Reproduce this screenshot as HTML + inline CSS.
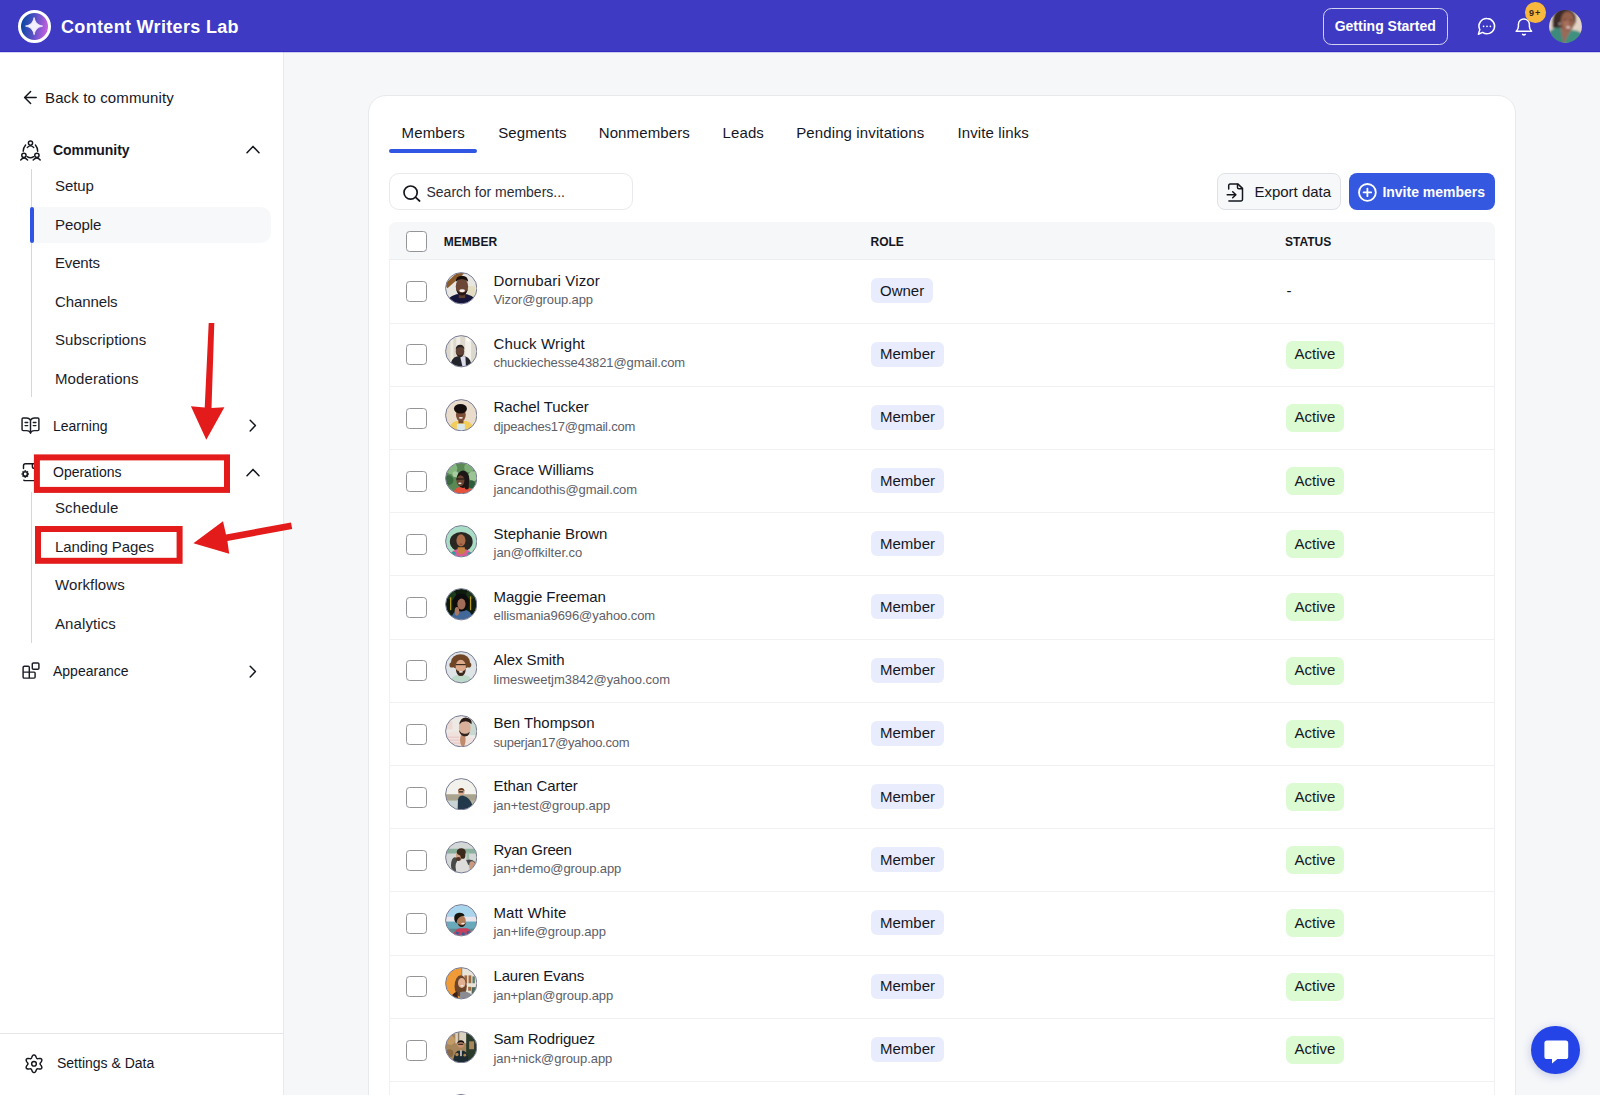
<!DOCTYPE html>
<html lang="en"><head><meta charset="utf-8"><title>Content Writers Lab – People</title>
<style>
*{box-sizing:border-box}
html,body{margin:0;padding:0}
body{width:1600px;height:1095px;overflow:hidden;background:#f6f7f9;font-family:"Liberation Sans",sans-serif;color:#15171f;position:relative}
.abs,.t,.av,.cb,.nm,.em,.role,.st,.dash,.sep{position:absolute}
.t{line-height:1;white-space:nowrap}
#top{position:absolute;left:0;top:0;width:1600px;height:52px;background:#3e3ac4;border-bottom:1px solid #332cc3;box-shadow:0 1px 0 rgba(62,58,196,.22)}
#side{position:absolute;left:0;top:52px;width:284px;height:1043px;background:#fff;border-right:1px solid #e7e9ed}
#card{position:absolute;left:368px;top:95px;width:1148px;height:1030px;background:#fff;border:1px solid #e7e9ec;border-radius:18px}
.s15{font-size:15px}.s14{font-size:14px}.b{font-weight:700}
.sub{left:55px;font-size:15px;letter-spacing:.1px;color:#1b1d29}
.topi{left:53px;font-size:14px;color:#15171f}
.vline{position:absolute;left:31px;width:1.2px;background:#d9d6da}
svg.ic{position:absolute;overflow:visible}
.cb{width:20.5px;height:20.5px;border:1.5px solid #949599;border-radius:3.6px;background:#fff}
.nm{left:493.5px;font-size:15px;line-height:1;color:#15171f;white-space:nowrap}
.em{left:493.5px;font-size:13px;line-height:1;color:#5d6068;white-space:nowrap}
.role{left:871.3px;height:25px;overflow:hidden;padding:0 8.7px;background:#e8ecfd;border-radius:6px;font-size:15px;color:#15171f;white-space:nowrap}
.st{left:1286px;height:28.4px;overflow:hidden;padding:0 8.5px;background:#dcfbd3;border-radius:6.5px;font-size:15px;color:#15171f;white-space:nowrap}
.dash{left:1286.5px;font-size:15px;line-height:1}
.sep{left:390px;width:1105px;height:1px;background:#f0f1f3}
.tab{font-size:15px;letter-spacing:.12px;top:125.3px;color:#15171f}
.th{font-size:12px;font-weight:700;top:235.8px;color:#15171f}
</style></head><body>

<!-- main card -->
<div id="card"></div>
<!-- tabs -->
<div class="t tab" style="left:401.6px">Members</div>
<div class="t tab" style="left:498.2px">Segments</div>
<div class="t tab" style="left:598.7px">Nonmembers</div>
<div class="t tab" style="left:722.5px">Leads</div>
<div class="t tab" style="left:796.2px">Pending invitations</div>
<div class="t tab" style="left:957.5px">Invite links</div>
<div class="abs" style="left:389.4px;top:148.8px;width:87.8px;height:3.8px;border-radius:2px;background:#3056e3"></div>

<!-- search -->
<div class="abs" style="left:389px;top:173px;width:244px;height:37px;border:1px solid #e7e9ec;border-radius:10px;background:#fff"></div>
<svg class="ic" style="left:403px;top:185px" width="18" height="17" viewBox="0 0 18 17"><circle cx="7.6" cy="7.6" r="6.6" fill="none" stroke="#15171f" stroke-width="1.7"/><path d="M12.4 12.2 L16.6 16" stroke="#15171f" stroke-width="1.7" stroke-linecap="round"/></svg>
<div class="t s14" style="left:426.5px;top:185.1px;color:#2b2d36">Search for members...</div>

<!-- buttons -->
<div class="abs" style="left:1216.5px;top:173px;width:124.2px;height:37px;border:1px solid #dfe1e6;border-radius:8px;background:#f7f8fa"></div>
<svg class="ic" style="left:1226px;top:182.5px" width="18" height="19" viewBox="0 0 18 19" fill="none" stroke="#15171f" stroke-width="1.5" stroke-linecap="round" stroke-linejoin="round"><path d="M2.7 5.9 V2.5 Q2.7 1.1 4.1 1.1 H12 L16.5 5.4 V16.5 Q16.5 17.9 15.1 17.9 H2.9"/><path d="M11.5 1.3 V4.4 Q11.5 5.7 12.8 5.7 H16.3"/><path d="M1.2 11.8 H9.7 M6.7 8.8 L9.9 11.8 L6.7 14.8"/></svg>
<div class="t s15" style="left:1254.4px;top:184.3px">Export data</div>
<div class="abs" style="left:1348.6px;top:173px;width:146.6px;height:37px;border-radius:8px;background:#3558e0"></div>
<svg class="ic" style="left:1358px;top:182.7px" width="19" height="19" viewBox="0 0 19 19" fill="none" stroke="#fff" stroke-width="1.8" stroke-linecap="round"><circle cx="9.4" cy="9.4" r="8.4"/><path d="M9.4 5.6 V13.2 M5.6 9.4 H13.2"/></svg>
<div class="t s14 b" style="left:1382.4px;top:185.1px;color:#fff">Invite members</div>

<!-- table -->
<div class="abs" style="left:389.4px;top:222.4px;width:1106px;height:900px;border-left:1px solid #f0f1f4;border-right:1px solid #f0f1f4;border-radius:8px 8px 0 0"></div>
<div class="abs" style="left:389.4px;top:222.4px;width:1106px;height:37.4px;background:#f6f7f9;border-radius:8px 8px 0 0;border-bottom:1px solid #eceef1"></div>
<div class="cb" style="left:406px;top:231px"></div>
<div class="t th" style="left:443.8px">MEMBER</div>
<div class="t th" style="left:870.5px">ROLE</div>
<div class="t th" style="left:1285px">STATUS</div>
<div class="sep" style="top:323px"></div>
<div class="cb" style="left:406px;top:281px"></div>
<svg class="av" style="left:444.7px;top:272.2px" width="32.5" height="32.5" viewBox="0 0 33 33"><defs><clipPath id="c0"><circle cx="16.5" cy="16.5" r="15.6"/></clipPath><filter id="b0" x="-10%" y="-10%" width="120%" height="120%"><feGaussianBlur stdDeviation="0.5"/></filter></defs><g clip-path="url(#c0)"><g transform="translate(0.5,0.5)" filter="url(#b0)"><rect x="-2" y="-2" width="36" height="36" fill="#e7e6e1"/><path d="M-1 12 L12 0 L20 0 L2 16 Z" fill="#8a5a2c"/><rect x="22" y="14" width="8" height="14" fill="#e4dcc0"/><ellipse cx="16.5" cy="30" rx="14" ry="8.5" fill="#15173a"/><rect x="13.5" y="20" width="6.5" height="6" fill="#5b3a2c"/><ellipse cx="16.7" cy="14.2" rx="6.3" ry="8.6" fill="#6d4636"/><path d="M10.4 9.5 Q10.5 3.3 16.7 3.3 Q22.9 3.3 23 9.5 Q20 6.6 16.7 6.6 Q13.4 6.6 10.4 9.5Z" fill="#16100e"/><path d="M10.8 16 Q11.5 23.4 16.7 23.4 Q21.9 23.4 22.6 16 Q21.5 20.4 16.7 20.6 Q11.9 20.4 10.8 16Z" fill="#231613"/><ellipse cx="16.9" cy="18.6" rx="2.9" ry="1.5" fill="#f6f1ec"/></g></g><circle cx="16.5" cy="16.5" r="15.9" fill="none" stroke="#737790" stroke-width="1"/></svg>
<div class="nm" style="top:273px;letter-spacing:0.17px">Dornubari Vizor</div>
<div class="em" style="top:293px;letter-spacing:-0.11px">Vizor@group.app</div>
<div class="role" style="top:278px;line-height:25px">Owner</div>
<div class="dash" style="top:283px">-</div>
<div class="sep" style="top:386px"></div>
<div class="cb" style="left:406px;top:344px"></div>
<svg class="av" style="left:444.7px;top:335.4px" width="32.5" height="32.5" viewBox="0 0 33 33"><defs><clipPath id="c1"><circle cx="16.5" cy="16.5" r="15.6"/></clipPath><filter id="b1" x="-10%" y="-10%" width="120%" height="120%"><feGaussianBlur stdDeviation="0.5"/></filter></defs><g clip-path="url(#c1)"><g transform="translate(0.5,0.5)" filter="url(#b1)"><rect x="-2" y="-2" width="36" height="36" fill="#ddd8cd"/><rect x="5" y="-2" width="3" height="36" fill="#efebe2"/><rect x="11" y="-2" width="4" height="36" fill="#f1ede6"/><rect x="20" y="-2" width="6" height="36" fill="#f3f0ea"/><circle cx="22.8" cy="4.4" r="2" fill="#fffdf6"/><path d="M4.5 34 Q5 22.5 12 21.2 L20 21 Q26.5 22.6 27 34 Z" fill="#24262c"/><path d="M14.8 21 L20.2 21 L20.8 33 L17.6 33 Z" fill="#dddcec"/><ellipse cx="14.7" cy="16.2" rx="4.3" ry="5.6" fill="#5e4334"/><path d="M10.3 14.4 Q10.6 9.3 14.8 9.3 Q19 9.3 19.2 14.2 Q17 11.8 14.7 11.8 Q12.4 11.8 10.3 14.4Z" fill="#2b2422"/><path d="M11.6 18.6 Q12.6 22.2 15 22 Q17.6 21.8 18.4 18.4 Q17 20.4 15 20.4 Q13 20.4 11.6 18.6Z" fill="#2e221d"/></g></g><circle cx="16.5" cy="16.5" r="15.9" fill="none" stroke="#737790" stroke-width="1"/></svg>
<div class="nm" style="top:336px;letter-spacing:0.14px">Chuck Wright</div>
<div class="em" style="top:356px;letter-spacing:-0.08px">chuckiechesse43821@gmail.com</div>
<div class="role" style="top:342px;line-height:23px">Member</div>
<div class="st" style="top:341px;line-height:25px">Active</div>
<div class="sep" style="top:449px"></div>
<div class="cb" style="left:406px;top:408px"></div>
<svg class="av" style="left:444.7px;top:398.6px" width="32.5" height="32.5" viewBox="0 0 33 33"><defs><clipPath id="c2"><circle cx="16.5" cy="16.5" r="15.6"/></clipPath><filter id="b2" x="-10%" y="-10%" width="120%" height="120%"><feGaussianBlur stdDeviation="0.5"/></filter></defs><g clip-path="url(#c2)"><g transform="translate(0.5,0.5)" filter="url(#b2)"><rect x="-2" y="-2" width="36" height="36" fill="#eadccb"/><path d="M3 34 Q4 23 11 21.8 L21 21.8 Q28.6 23 29.5 34 Z" fill="#f3cd58"/><path d="M11.6 25 Q15.5 23.6 19.6 25 L19.8 34 L11.4 34Z" fill="#d9e6ea"/><rect x="13.2" y="19" width="5" height="5.2" fill="#71452f"/><ellipse cx="15.6" cy="15.6" rx="5" ry="6.6" fill="#7b4d35"/><ellipse cx="15.2" cy="9.4" rx="6.6" ry="4.9" fill="#17110f"/><ellipse cx="15.6" cy="18.6" rx="2.1" ry="0.9" fill="#f3ebe4"/></g></g><circle cx="16.5" cy="16.5" r="15.9" fill="none" stroke="#737790" stroke-width="1"/></svg>
<div class="nm" style="top:399px;letter-spacing:-0.05px">Rachel Tucker</div>
<div class="em" style="top:420px;letter-spacing:-0.22px">djpeaches17@gmail.com</div>
<div class="role" style="top:405px;line-height:23px">Member</div>
<div class="st" style="top:404px;line-height:25px">Active</div>
<div class="sep" style="top:512px"></div>
<div class="cb" style="left:406px;top:471px"></div>
<svg class="av" style="left:444.7px;top:461.8px" width="32.5" height="32.5" viewBox="0 0 33 33"><defs><clipPath id="c3"><circle cx="16.5" cy="16.5" r="15.6"/></clipPath><filter id="b3" x="-10%" y="-10%" width="120%" height="120%"><feGaussianBlur stdDeviation="0.5"/></filter></defs><g clip-path="url(#c3)"><g transform="translate(0.5,0.5)" filter="url(#b3)"><rect x="-2" y="-2" width="36" height="36" fill="#5a8956"/><circle cx="6" cy="6" r="6" fill="#86b67f"/><circle cx="24" cy="5" r="5" fill="#7eae78"/><circle cx="28" cy="14" r="5" fill="#9cc596"/><circle cx="3" cy="18" r="5" fill="#3a6a40"/><circle cx="26" cy="22" r="4" fill="#2f5c37"/><circle cx="10" cy="12" r="3" fill="#a6cc9f"/><path d="M7 34 Q8.5 26 14 25 L22 24.6 Q27.6 26 28.6 34Z" fill="#e8513b"/><ellipse cx="17.8" cy="17" rx="6.4" ry="8.8" fill="#1e1715"/><rect x="19.5" y="17" width="4.2" height="10.5" rx="2" fill="#1e1715"/><ellipse cx="15.2" cy="18.4" rx="4" ry="5.5" fill="#6c4533"/><rect x="11" y="16.2" width="8" height="1.1" fill="#1a1513"/><ellipse cx="14.6" cy="21.2" rx="1.8" ry="0.8" fill="#efe6e0"/></g></g><circle cx="16.5" cy="16.5" r="15.9" fill="none" stroke="#737790" stroke-width="1"/></svg>
<div class="nm" style="top:462px;letter-spacing:-0.04px">Grace Williams</div>
<div class="em" style="top:483px;letter-spacing:-0.09px">jancandothis@gmail.com</div>
<div class="role" style="top:468px;line-height:25px">Member</div>
<div class="st" style="top:467px;line-height:27px">Active</div>
<div class="sep" style="top:575px"></div>
<div class="cb" style="left:406px;top:534px"></div>
<svg class="av" style="left:444.7px;top:525.0px" width="32.5" height="32.5" viewBox="0 0 33 33"><defs><clipPath id="c4"><circle cx="16.5" cy="16.5" r="15.6"/></clipPath><filter id="b4" x="-10%" y="-10%" width="120%" height="120%"><feGaussianBlur stdDeviation="0.5"/></filter></defs><g clip-path="url(#c4)"><g transform="translate(0.5,0.5)" filter="url(#b4)"><rect x="-2" y="-2" width="36" height="36" fill="#a9ddc5"/><ellipse cx="16" cy="16.4" rx="11.6" ry="9.8" fill="#2b2521"/><ellipse cx="16" cy="21" rx="9.5" ry="5" fill="#2b2521"/><path d="M4 34 Q5 25.4 11.4 24 L20.6 24 Q27 25.4 28 34Z" fill="#d95b9a"/><circle cx="8" cy="28.5" r="2.2" fill="#2f9c98"/><circle cx="24.6" cy="29" r="2.2" fill="#2f9c98"/><path d="M12.4 22 L19.6 22 L20 27 Q16 32 12 27Z" fill="#c4813f"/><ellipse cx="15.7" cy="15.2" rx="4.6" ry="6.2" fill="#a96d49"/><ellipse cx="15.7" cy="19" rx="1.5" ry="0.6" fill="#8c3f3a"/></g></g><circle cx="16.5" cy="16.5" r="15.9" fill="none" stroke="#737790" stroke-width="1"/></svg>
<div class="nm" style="top:526px;letter-spacing:-0.02px">Stephanie Brown</div>
<div class="em" style="top:546px">jan@offkilter.co</div>
<div class="role" style="top:531px;line-height:25px">Member</div>
<div class="st" style="top:530px;line-height:27px">Active</div>
<div class="sep" style="top:639px"></div>
<div class="cb" style="left:406px;top:597px"></div>
<svg class="av" style="left:444.7px;top:588.2px" width="32.5" height="32.5" viewBox="0 0 33 33"><defs><clipPath id="c5"><circle cx="16.5" cy="16.5" r="15.6"/></clipPath><filter id="b5" x="-10%" y="-10%" width="120%" height="120%"><feGaussianBlur stdDeviation="0.5"/></filter></defs><g clip-path="url(#c5)"><g transform="translate(0.5,0.5)" filter="url(#b5)"><rect x="-2" y="-2" width="36" height="36" fill="#0e1a11"/><circle cx="6" cy="7" r="5" fill="#1f3a1e"/><circle cx="26" cy="6" r="5" fill="#1b3319"/><rect x="4.6" y="9" width="1.3" height="13" fill="#b5981f"/><rect x="24.8" y="8" width="1.3" height="14" fill="#b5981f"/><path d="M5 34 Q6 24 12.6 22.4 L21.6 22 Q27.6 24 28.6 34Z" fill="#40699a"/><ellipse cx="15.8" cy="14.2" rx="8.2" ry="9.2" fill="#0b0909"/><ellipse cx="16.2" cy="15.8" rx="4.2" ry="5.6" fill="#a16d59"/><ellipse cx="11.6" cy="23.2" rx="2.3" ry="4.4" fill="#a97662"/></g></g><circle cx="16.5" cy="16.5" r="15.9" fill="none" stroke="#737790" stroke-width="1"/></svg>
<div class="nm" style="top:589px;letter-spacing:-0.08px">Maggie Freeman</div>
<div class="em" style="top:609px;letter-spacing:-0.08px">ellismania9696@yahoo.com</div>
<div class="role" style="top:594px;line-height:25px">Member</div>
<div class="st" style="top:593px;line-height:27px">Active</div>
<div class="sep" style="top:702px"></div>
<div class="cb" style="left:406px;top:660px"></div>
<svg class="av" style="left:444.7px;top:651.4px" width="32.5" height="32.5" viewBox="0 0 33 33"><defs><clipPath id="c6"><circle cx="16.5" cy="16.5" r="15.6"/></clipPath><filter id="b6" x="-10%" y="-10%" width="120%" height="120%"><feGaussianBlur stdDeviation="0.5"/></filter></defs><g clip-path="url(#c6)"><g transform="translate(0.5,0.5)" filter="url(#b6)"><rect x="-2" y="-2" width="36" height="36" fill="#dfe4e7"/><path d="M4 34 Q5 25.6 11.4 24.2 L20.4 24.2 Q27 25.6 28 34Z" fill="#bdd9c9"/><ellipse cx="15.2" cy="10.6" rx="9.6" ry="7.8" fill="#6f4527"/><circle cx="6.6" cy="13.6" r="2.6" fill="#6f4527"/><circle cx="23.6" cy="13.6" r="2.6" fill="#6f4527"/><ellipse cx="15.5" cy="15.4" rx="5.2" ry="7" fill="#dcaa8b"/><path d="M10.4 17 Q11 25 15.6 25 Q20.2 25 20.7 17 Q19.5 20.4 15.6 20 Q11.6 20.4 10.4 17Z" fill="#3b271b"/><rect x="10.6" y="12.7" width="10" height="1.2" fill="#3a2a22"/><ellipse cx="15.6" cy="20.6" rx="2.2" ry="0.9" fill="#f1e7e0"/></g></g><circle cx="16.5" cy="16.5" r="15.9" fill="none" stroke="#737790" stroke-width="1"/></svg>
<div class="nm" style="top:652px;letter-spacing:-0.07px">Alex Smith</div>
<div class="em" style="top:673px;letter-spacing:-0.03px">limesweetjm3842@yahoo.com</div>
<div class="role" style="top:658px;line-height:23px">Member</div>
<div class="st" style="top:657px;line-height:25px">Active</div>
<div class="sep" style="top:765px"></div>
<div class="cb" style="left:406px;top:724px"></div>
<svg class="av" style="left:444.7px;top:714.6px" width="32.5" height="32.5" viewBox="0 0 33 33"><defs><clipPath id="c7"><circle cx="16.5" cy="16.5" r="15.6"/></clipPath><filter id="b7" x="-10%" y="-10%" width="120%" height="120%"><feGaussianBlur stdDeviation="0.5"/></filter></defs><g clip-path="url(#c7)"><g transform="translate(0.5,0.5)" filter="url(#b7)"><rect x="-2" y="-2" width="36" height="36" fill="#ede9e5"/><rect x="24" y="4" width="10" height="16" fill="#c9d9d1"/><rect x="-2" y="6" width="9" height="8" fill="#ecd9d2"/><path d="M-1 34 L0 20 Q6 14.6 14 17 L20 21 L30 24 L30 34Z" fill="#f1e1dd"/><path d="M1 22 H14 M0 25 H15 M1 28 H16 M3 31 H17" stroke="#e3bcbc" stroke-width="0.8" fill="none"/><ellipse cx="17.6" cy="25" rx="2.8" ry="6.6" fill="#c08b6b"/><ellipse cx="19.6" cy="12.6" rx="6" ry="8" fill="#d9b19b"/><path d="M14 9.4 Q15 1.6 21.6 2.2 Q27.6 3 26.4 9 Q23 5.4 19.6 6 Q16 6 14 9.4Z" fill="#2a1f19"/><path d="M13.6 14.8 Q15 21.6 20.6 21.2 Q24 20.6 24.6 16.4 Q22 19 19 18.6 Q15.6 18.2 13.6 14.8Z" fill="#33241d"/></g></g><circle cx="16.5" cy="16.5" r="15.9" fill="none" stroke="#737790" stroke-width="1"/></svg>
<div class="nm" style="top:715px;letter-spacing:-0.04px">Ben Thompson</div>
<div class="em" style="top:736px;letter-spacing:-0.27px">superjan17@yahoo.com</div>
<div class="role" style="top:721px;line-height:23px">Member</div>
<div class="st" style="top:720px;line-height:25px">Active</div>
<div class="sep" style="top:828px"></div>
<div class="cb" style="left:406px;top:787px"></div>
<svg class="av" style="left:444.7px;top:777.8px" width="32.5" height="32.5" viewBox="0 0 33 33"><defs><clipPath id="c8"><circle cx="16.5" cy="16.5" r="15.6"/></clipPath><filter id="b8" x="-10%" y="-10%" width="120%" height="120%"><feGaussianBlur stdDeviation="0.5"/></filter></defs><g clip-path="url(#c8)"><g transform="translate(0.5,0.5)" filter="url(#b8)"><rect x="-2" y="-2" width="36" height="36" fill="#f3f1eb"/><rect x="-2" y="16" width="36" height="7" fill="#aaa38d"/><rect x="-2" y="22.4" width="16" height="12" fill="#c9d5d4"/><rect x="12" y="22.4" width="22" height="12" fill="#b9b5a3"/><path d="M12.4 34 L12.8 21 Q14 16.8 18 17.4 Q25 19 27.8 28 L27 34Z" fill="#24394b"/><circle cx="16" cy="13.6" r="3.3" fill="#d8a98a"/><path d="M12.7 12.8 Q13 9.6 16.2 9.6 Q19.4 9.8 19.2 13 Q17.6 11.6 16 11.8 Q14.2 11.8 12.7 12.8Z" fill="#6b3b23"/><rect x="13.2" y="13" width="5" height="1.3" rx="0.5" fill="#1d1a1a"/></g></g><circle cx="16.5" cy="16.5" r="15.9" fill="none" stroke="#737790" stroke-width="1"/></svg>
<div class="nm" style="top:778px;letter-spacing:-0.07px">Ethan Carter</div>
<div class="em" style="top:799px;letter-spacing:-0.06px">jan+test@group.app</div>
<div class="role" style="top:784px;line-height:25px">Member</div>
<div class="st" style="top:783px;line-height:27px">Active</div>
<div class="sep" style="top:891px"></div>
<div class="cb" style="left:406px;top:850px"></div>
<svg class="av" style="left:444.7px;top:841.0px" width="32.5" height="32.5" viewBox="0 0 33 33"><defs><clipPath id="c9"><circle cx="16.5" cy="16.5" r="15.6"/></clipPath><filter id="b9" x="-10%" y="-10%" width="120%" height="120%"><feGaussianBlur stdDeviation="0.5"/></filter></defs><g clip-path="url(#c9)"><g transform="translate(0.5,0.5)" filter="url(#b9)"><rect x="-2" y="-2" width="36" height="36" fill="#d3d7d5"/><rect x="-2" y="7.4" width="36" height="4.8" fill="#8ab09d"/><rect x="21.4" y="11" width="2.6" height="7" fill="#9cbfae"/><ellipse cx="9.6" cy="24" rx="4" ry="8" fill="#47484a"/><path d="M20 18.8 Q27 17 30.4 21 L28 25 L21 23Z" fill="#47484a"/><ellipse cx="27" cy="24.4" rx="3" ry="4.4" fill="#c99a7c"/><ellipse cx="16.6" cy="26" rx="6.4" ry="9.6" fill="#dddcdb"/><ellipse cx="14" cy="14.6" rx="3.4" ry="4.8" fill="#d1a283"/><ellipse cx="16" cy="10.6" rx="4.6" ry="3.8" fill="#3a2a1f"/><ellipse cx="17.6" cy="13.6" rx="2.6" ry="4" fill="#3a2a1f"/><ellipse cx="13" cy="17.8" rx="2.6" ry="2" fill="#4c3526"/></g></g><circle cx="16.5" cy="16.5" r="15.9" fill="none" stroke="#737790" stroke-width="1"/></svg>
<div class="nm" style="top:842px;letter-spacing:-0.28px">Ryan Green</div>
<div class="em" style="top:862px;letter-spacing:-0.08px">jan+demo@group.app</div>
<div class="role" style="top:847px;line-height:25px">Member</div>
<div class="st" style="top:846px;line-height:27px">Active</div>
<div class="sep" style="top:955px"></div>
<div class="cb" style="left:406px;top:913px"></div>
<svg class="av" style="left:444.7px;top:904.2px" width="32.5" height="32.5" viewBox="0 0 33 33"><defs><clipPath id="c10"><circle cx="16.5" cy="16.5" r="15.6"/></clipPath><filter id="b10" x="-10%" y="-10%" width="120%" height="120%"><feGaussianBlur stdDeviation="0.5"/></filter></defs><g clip-path="url(#c10)"><g transform="translate(0.5,0.5)" filter="url(#b10)"><rect x="-2" y="-2" width="36" height="36" fill="#a9d5ed"/><rect x="-2" y="12.4" width="36" height="5" fill="#e9e5ea"/><rect x="-2" y="17.4" width="36" height="8" fill="#6ba9ba"/><rect x="-2" y="24.6" width="36" height="10" fill="#5c8a92"/><path d="M7 34 Q8.6 25.2 14 24 L22 24 Q26.6 25.4 27.4 34Z" fill="#c6405b"/><circle cx="12" cy="29" r="1.7" fill="#3b5b9b"/><circle cx="18" cy="30" r="1.7" fill="#3b5b9b"/><circle cx="23" cy="28.4" r="1.6" fill="#3b5b9b"/><ellipse cx="16" cy="16.8" rx="4.6" ry="5.8" fill="#b17b59"/><path d="M9 15.6 Q8 9 13.6 8.4 Q18.6 8.2 19.4 11.4 Q15 11.4 12.6 14.4 Q11 17 11.4 19 Q9.6 18 9 15.6Z" fill="#17120f"/><path d="M12.4 19.4 Q14 24 18 22.6 Q20.4 21.4 20.6 18.6 Q18.6 21.2 16.4 21 Q14 20.8 12.4 19.4Z" fill="#2a1c15"/><ellipse cx="17.8" cy="19.4" rx="1.9" ry="0.8" fill="#f3ece6"/></g></g><circle cx="16.5" cy="16.5" r="15.9" fill="none" stroke="#737790" stroke-width="1"/></svg>
<div class="nm" style="top:905px;letter-spacing:0.12px">Matt White</div>
<div class="em" style="top:925px;letter-spacing:-0.05px">jan+life@group.app</div>
<div class="role" style="top:910px;line-height:25px">Member</div>
<div class="st" style="top:909px;line-height:27px">Active</div>
<div class="sep" style="top:1018px"></div>
<div class="cb" style="left:406px;top:976px"></div>
<svg class="av" style="left:444.7px;top:967.4px" width="32.5" height="32.5" viewBox="0 0 33 33"><defs><clipPath id="c11"><circle cx="16.5" cy="16.5" r="15.6"/></clipPath><filter id="b11" x="-10%" y="-10%" width="120%" height="120%"><feGaussianBlur stdDeviation="0.5"/></filter></defs><g clip-path="url(#c11)"><g transform="translate(0.5,0.5)" filter="url(#b11)"><rect x="-2" y="-2" width="36" height="36" fill="#f09b39"/><rect x="16" y="-2" width="18" height="36" fill="#e8e4d8"/><rect x="16" y="-2" width="1" height="18" fill="#6f7f7a"/><rect x="19.2" y="8" width="2.8" height="8" fill="#a06b41"/><rect x="23.4" y="8" width="2.8" height="8" fill="#a06b41"/><rect x="27.4" y="9" width="2.4" height="7" fill="#5d7a69"/><rect x="23" y="19.6" width="3" height="4" fill="#a06b41"/><rect x="26.6" y="20" width="6" height="8" fill="#4b6b5b"/><ellipse cx="15.4" cy="19" rx="6.2" ry="11" fill="#6b4529"/><path d="M4 34 Q6 26 12 24.4 L13 34Z" fill="#3a2418"/><path d="M14 34 L15 25 Q20 23 25.6 26.6 L27.4 34Z" fill="#8a8c91"/><ellipse cx="16.5" cy="15.8" rx="3.8" ry="5.1" fill="#e1b191"/><ellipse cx="16.8" cy="18.6" rx="1.6" ry="0.7" fill="#f5eee8"/></g></g><circle cx="16.5" cy="16.5" r="15.9" fill="none" stroke="#737790" stroke-width="1"/></svg>
<div class="nm" style="top:968px;letter-spacing:-0.16px">Lauren Evans</div>
<div class="em" style="top:989px;letter-spacing:-0.09px">jan+plan@group.app</div>
<div class="role" style="top:974px;line-height:23px">Member</div>
<div class="st" style="top:973px;line-height:25px">Active</div>
<div class="sep" style="top:1081px"></div>
<div class="cb" style="left:406px;top:1040px"></div>
<svg class="av" style="left:444.7px;top:1030.6px" width="32.5" height="32.5" viewBox="0 0 33 33"><defs><clipPath id="c12"><circle cx="16.5" cy="16.5" r="15.6"/></clipPath><filter id="b12" x="-10%" y="-10%" width="120%" height="120%"><feGaussianBlur stdDeviation="0.5"/></filter></defs><g clip-path="url(#c12)"><g transform="translate(0.5,0.5)" filter="url(#b12)"><rect x="-2" y="-2" width="36" height="36" fill="#a7865b"/><rect x="10" y="-2" width="12" height="14" fill="#d9d1c1"/><rect x="21" y="-2" width="13" height="36" fill="#2b3b2b"/><rect x="24" y="10" width="5" height="8" fill="#a7865b"/><circle cx="5" cy="9" r="4.6" fill="#c49c68"/><circle cx="4" cy="22" r="4" fill="#8a6a44"/><rect x="12.6" y="-2" width="1.4" height="12" fill="#8d7a5e"/><path d="M7.4 34 Q8 21.6 12.6 19.6 L18.6 19.6 Q23.6 21.6 24 34Z" fill="#1e2a30"/><rect x="14.9" y="19" width="1.6" height="6" fill="#d6d6d2"/><circle cx="11.6" cy="23.4" r="1.7" fill="#b08850"/><circle cx="19.6" cy="24" r="1.4" fill="#b08850"/><circle cx="15.5" cy="13" r="3.5" fill="#c99171"/><path d="M11.9 12.4 Q12 8.8 15.6 8.8 Q19.2 8.8 19.2 12.4 Q17.4 10.8 15.6 10.9 Q13.6 10.8 11.9 12.4Z" fill="#15100e"/><rect x="12.9" y="12.4" width="5.2" height="1.1" fill="#1c1715"/></g></g><circle cx="16.5" cy="16.5" r="15.9" fill="none" stroke="#737790" stroke-width="1"/></svg>
<div class="nm" style="top:1031px;letter-spacing:-0.16px">Sam Rodriguez</div>
<div class="em" style="top:1052px;letter-spacing:-0.06px">jan+nick@group.app</div>
<div class="role" style="top:1037px;line-height:23px">Member</div>
<div class="st" style="top:1036px;line-height:25px">Active</div>
<div class="abs" style="left:444.7px;top:1093.6px;width:32.5px;height:32.5px;border-radius:50%;border:1px solid #737790;background:#cfd3da"></div>

<!-- sidebar -->
<div id="side"></div>
<svg class="ic" style="left:23px;top:90px" width="15" height="15" viewBox="0 0 15 15" fill="none" stroke="#15171f" stroke-width="1.5" stroke-linecap="round" stroke-linejoin="round"><path d="M13.2 7.5 H1.8 M7.6 1.5 L1.6 7.5 L7.6 13.5"/></svg>
<div class="t s15" style="left:45px;top:90px;letter-spacing:.13px">Back to community</div>

<svg class="ic" style="left:20px;top:139.5px" width="21" height="21" viewBox="0 0 21 21" fill="none" stroke="#15171f" stroke-width="1.45" stroke-linecap="round"><circle cx="10.5" cy="3.1" r="2.1"/><path d="M7.3 7.5 Q10.5 4.2 13.7 7.5"/><circle cx="3.9" cy="15.3" r="2.15"/><path d="M0.7 20 Q3.9 16.1 7.6 20"/><circle cx="16.9" cy="15.3" r="2.15"/><path d="M13.2 20 Q16.9 16.1 20.2 20"/><path d="M5.6 5 Q3.3 7.6 3.2 11.2"/><path d="M15.4 5 Q17.6 7.6 17.7 11.2"/><path d="M7.2 16.7 Q10.5 18.9 13.6 16.7"/></svg>
<div class="t topi b" style="top:142.8px;letter-spacing:-.05px">Community</div>
<svg class="ic" style="left:245.7px;top:145px" width="14" height="9" viewBox="0 0 14 9" fill="none" stroke="#15171f" stroke-width="1.5" stroke-linecap="round" stroke-linejoin="round"><path d="M1 7.8 L7 1.4 L13 7.8"/></svg>
<div class="vline" style="top:168.5px;height:228.5px"></div>
<div class="abs" style="left:30px;top:206.6px;width:241px;height:36.2px;background:#f7f8fa;border-radius:3px 10px 10px 3px"></div>
<div class="abs" style="left:30px;top:206.6px;width:4px;height:36.2px;background:#2f55e4;border-radius:2px"></div>
<div class="t sub" style="top:178px;letter-spacing:-.1px">Setup</div>
<div class="t sub" style="top:216.6px;letter-spacing:-.07px">People</div>
<div class="t sub" style="top:255px;letter-spacing:-.18px">Events</div>
<div class="t sub" style="top:293.6px;letter-spacing:-.11px">Channels</div>
<div class="t sub" style="top:332.1px">Subscriptions</div>
<div class="t sub" style="top:370.5px">Moderations</div>

<svg class="ic" style="left:20px;top:416px" width="21" height="19" viewBox="0 0 21 19" fill="none" stroke="#1b1d27" stroke-width="1.45" stroke-linecap="round" stroke-linejoin="round"><path d="M10.5 4 Q9 1.9 6.6 1.9 H3.2 Q2.06 1.9 2.06 3 V13.5 Q2.06 14.6 3.2 14.6 H6.8 Q9.2 14.6 10.5 16.6 Q11.8 14.6 14.2 14.6 H17.8 Q18.9 14.6 18.9 13.5 V3 Q18.9 1.9 17.8 1.9 H14.4 Q12 1.9 10.5 4 Z"/><path d="M10.5 4 V17.2"/><path d="M5.1 6.4 H7.7 M5.1 9.6 H7.7 M13.3 6.4 H15.9 M13.3 9.6 H15.9"/></svg>
<div class="t topi" style="top:419px">Learning</div>
<svg class="ic" style="left:248.5px;top:419.2px" width="8" height="13" viewBox="0 0 8 13" fill="none" stroke="#15171f" stroke-width="1.5" stroke-linecap="round" stroke-linejoin="round"><path d="M1.2 1.2 L6.4 6.6 L1.2 12"/></svg>

<svg class="ic" style="left:21px;top:463px" width="19" height="19" viewBox="0 0 19 19" fill="none" stroke="#15171f" stroke-width="1.45" stroke-linecap="round" stroke-linejoin="round"><path d="M2.5 5.4 V2.8 Q2.5 0.8 4.5 0.8 H15 Q17 0.8 17 2.8 V15.6 Q17 17.6 15 17.6 H4.2 Q3.2 17.6 2.9 17.2"/><path d="M11.4 0.9 V3.4 Q11.4 5.3 13.3 5.3"/><circle cx="4.25" cy="11.0" r="2.25" stroke-width="1.7"/><path d="M7.15 11.00 L8.00 11.00 M6.30 13.05 L6.90 13.65 M4.25 13.90 L4.25 14.75 M2.20 13.05 L1.60 13.65 M1.35 11.00 L0.50 11.00 M2.20 8.95 L1.60 8.35 M4.25 8.10 L4.25 7.25 M6.30 8.95 L6.90 8.35" stroke-width="1.7" stroke-linecap="butt"/></svg>
<div class="t topi" style="top:464.7px">Operations</div>
<svg class="ic" style="left:245.7px;top:467.8px" width="14" height="9" viewBox="0 0 14 9" fill="none" stroke="#15171f" stroke-width="1.5" stroke-linecap="round" stroke-linejoin="round"><path d="M1 7.8 L7 1.4 L13 7.8"/></svg>
<div class="vline" style="top:492px;height:150.5px"></div>
<div class="t sub" style="top:500px">Schedule</div>
<div class="t sub" style="top:539.1px;letter-spacing:-.1px">Landing Pages</div>
<div class="t sub" style="top:577px">Workflows</div>
<div class="t sub" style="top:615.9px">Analytics</div>

<svg class="ic" style="left:21.5px;top:662.3px" width="18" height="17" viewBox="0 0 18 17" fill="none" stroke="#1b1d27" stroke-width="1.45" stroke-linejoin="round"><path d="M2.3 4.3 H6.3 Q7.3 4.3 7.3 5.3 V10.1 H12.1 Q13.1 10.1 13.1 11.1 V15.1 Q13.1 16.1 12.1 16.1 H2.3 Q1.1 16.1 1.1 14.9 V5.5 Q1.1 4.3 2.3 4.3 Z"/><path d="M7.3 10.1 V16.1 M1.1 10.1 H7.3"/><rect x="10.3" y="0.9" width="6.6" height="6.4" rx="1.1"/></svg>
<div class="t topi" style="top:664px">Appearance</div>
<svg class="ic" style="left:248.5px;top:664.6px" width="8" height="13" viewBox="0 0 8 13" fill="none" stroke="#15171f" stroke-width="1.5" stroke-linecap="round" stroke-linejoin="round"><path d="M1.2 1.2 L6.4 6.6 L1.2 12"/></svg>

<div class="abs" style="left:0;top:1033px;width:283px;height:1px;background:#e4e6ea"></div>
<svg class="ic" style="left:25.1px;top:1053.8px" width="18" height="19.5" viewBox="0 0 18 19.5" fill="none" stroke="#15171f" stroke-width="1.45" stroke-linejoin="round"><path d="M15.00 9.75 L15.17 10.29 L15.62 10.92 L16.20 11.68 L16.68 12.55 L16.89 13.43 L16.71 14.20 L16.13 14.74 L15.26 15.00 L14.27 15.02 L13.32 14.90 L12.55 14.82 L12.00 14.95 L11.62 15.36 L11.30 16.07 L10.93 16.95 L10.42 17.80 L9.76 18.42 L9.00 18.65 L8.24 18.42 L7.58 17.80 L7.07 16.95 L6.70 16.07 L6.38 15.36 L6.00 14.95 L5.45 14.82 L4.68 14.90 L3.73 15.02 L2.74 15.00 L1.87 14.74 L1.29 14.20 L1.11 13.43 L1.32 12.55 L1.80 11.68 L2.38 10.92 L2.83 10.29 L3.00 9.75 L2.83 9.21 L2.38 8.58 L1.80 7.82 L1.32 6.95 L1.11 6.07 L1.29 5.30 L1.87 4.76 L2.74 4.50 L3.73 4.48 L4.68 4.60 L5.45 4.68 L6.00 4.55 L6.38 4.14 L6.70 3.43 L7.07 2.55 L7.58 1.70 L8.24 1.08 L9.00 0.85 L9.76 1.08 L10.42 1.70 L10.93 2.55 L11.30 3.43 L11.62 4.14 L12.00 4.55 L12.55 4.68 L13.32 4.60 L14.27 4.48 L15.26 4.50 L16.13 4.76 L16.71 5.30 L16.89 6.07 L16.68 6.95 L16.20 7.82 L15.62 8.58 L15.17 9.21 Z"/><circle cx="9" cy="9.75" r="2.35"/></svg>
<div class="t s14" style="left:57px;top:1056.4px">Settings &amp; Data</div>

<!-- red annotations -->
<svg class="ic" style="left:0;top:300px" width="300" height="300" viewBox="0 300 300 300">
<rect x="36.9" y="457.4" width="190.1" height="32.5" fill="none" stroke="#e41b1b" stroke-width="6"/>
<rect x="38" y="529" width="141.6" height="31.8" fill="none" stroke="#e41b1b" stroke-width="6"/>
<polygon points="208.7,323 214.3,323 211.5,408 224.4,407.2 206.3,439.7 190.9,406.3 204.7,407.6" fill="#e41b1b"/>
<polygon points="193.4,543.3 223,521.3 226,534.6 291,522.4 292.2,529 227.4,541 229.2,553.7" fill="#e41b1b"/>
</svg>

<!-- top bar -->
<div id="top"></div>
<div class="abs" style="left:17.9px;top:9.6px;width:33px;height:33px;border-radius:50%;border:3px solid #fff;background:linear-gradient(100deg,#0e47a6 10%,#5b50c6 50%,#c562e0 92%)"></div>
<svg class="ic" style="left:25.2px;top:17.1px" width="18.2" height="18.2" viewBox="0 0 20 20"><path d="M10 0.6 C11.2 6.2 13.8 8.8 19.4 10 C13.8 11.2 11.2 13.8 10 19.4 C8.8 13.8 6.2 11.2 0.6 10 C6.2 8.8 8.8 6.2 10 0.6 Z" fill="#f4f0ff" stroke="#f4f0ff" stroke-width="0.9" stroke-linejoin="round"/></svg>
<div class="t b" style="left:61px;top:17.6px;font-size:18px;color:#fff;letter-spacing:.33px">Content Writers Lab</div>
<div class="abs" style="left:1323px;top:8px;width:125px;height:37px;border:1.2px solid rgba(255,255,255,.78);border-radius:8.5px"></div>
<div class="t s14 b" style="left:1334.7px;top:19.1px;color:#fff">Getting Started</div>
<svg class="ic" style="left:1476.8px;top:17.2px" width="19" height="19" viewBox="0 0 19 19" fill="none" stroke="#fff" stroke-width="1.5" stroke-linecap="round" stroke-linejoin="round"><path d="M10 1.6 A7.6 7.6 0 1 1 5.6 15.4 L1.4 17.2 L2.8 12.6 A7.6 7.6 0 0 1 10 1.6 Z"/><path d="M6.6 9.3 h0.01 M10 9.3 h0.01 M13.4 9.3 h0.01" stroke-width="1.7"/></svg>
<svg class="ic" style="left:1514.6px;top:16.6px" width="18" height="19.4" viewBox="0 0 18 19" fill="none" stroke="#fff" stroke-width="1.5" stroke-linecap="round" stroke-linejoin="round"><path d="M1.2 14 H16.6 Q14.4 12 14.4 9.4 V7.2 A5.5 5.5 0 0 0 3.4 7.2 V9.4 Q3.4 12 1.2 14 Z"/><path d="M7.6 17.2 Q8.9 18.2 10.2 17.2"/></svg>
<div class="abs" style="left:1525px;top:2.4px;width:20.6px;height:20.6px;border-radius:50%;background:#f8b73d"></div>
<div class="t b" style="left:1529px;top:8.5px;font-size:9px;color:#33291f;letter-spacing:1px">9+</div>
<svg class="ic" style="left:1549px;top:10px" width="33" height="33" viewBox="0 0 33 33"><defs><clipPath id="cu"><circle cx="16.5" cy="16.5" r="16.4"/></clipPath><filter id="bu" x="-20%" y="-20%" width="140%" height="140%"><feGaussianBlur stdDeviation="0.9"/></filter></defs><g clip-path="url(#cu)"><g filter="url(#bu)"><rect x="-3" y="-3" width="39" height="39" fill="#e6d9ca"/><ellipse cx="15.5" cy="9" rx="11.6" ry="11" fill="#3a2c27"/><rect x="3.5" y="9" width="9" height="9" fill="#3a2c27"/><rect x="27.2" y="0" width="6" height="22" fill="#e3d3c4"/><path d="M11 17 L22.5 19 L15.5 34 L11.5 34 Z" fill="#9a6a58"/><ellipse cx="18.7" cy="11.2" rx="6.9" ry="10" fill="#95604c"/><ellipse cx="17.2" cy="13.5" rx="3" ry="3.4" fill="#a8715c"/><ellipse cx="16" cy="9.8" rx="1.5" ry="0.7" fill="#4a342c"/><ellipse cx="22" cy="10.2" rx="1.4" ry="0.7" fill="#4a342c"/><ellipse cx="19.2" cy="17.6" rx="2.1" ry="1.1" fill="#f4ece6"/><ellipse cx="19.4" cy="19" rx="1.8" ry="0.6" fill="#8c3a3a"/><circle cx="10.7" cy="13.8" r="0.9" fill="#e8e2d8"/><path d="M-1 23 Q4 17 11.5 18 L14.5 34 L-1 34 Z" fill="#3c8a7c"/><path d="M34 24 Q28 19.5 21.8 20.2 L14.6 34 L34 34 Z" fill="#3f9080"/></g></g></svg>

<!-- chat widget -->
<div class="abs" style="left:1531.3px;top:1025.8px;width:48.4px;height:48.4px;border-radius:50%;background:#2444e8;box-shadow:0 2px 10px rgba(40,60,160,.25)"></div>
<svg class="ic" style="left:1543.5px;top:1039.8px" width="25" height="25" viewBox="0 0 25 25"><path d="M3 0.6 H21.6 Q24.2 0.6 24.2 3.2 V16.4 Q24.2 19 21.6 19 H13.4 L8 23.6 V19 H3 Q0.4 19 0.4 16.4 V3.2 Q0.4 0.6 3 0.6 Z" fill="#fff"/></svg>

</body></html>
